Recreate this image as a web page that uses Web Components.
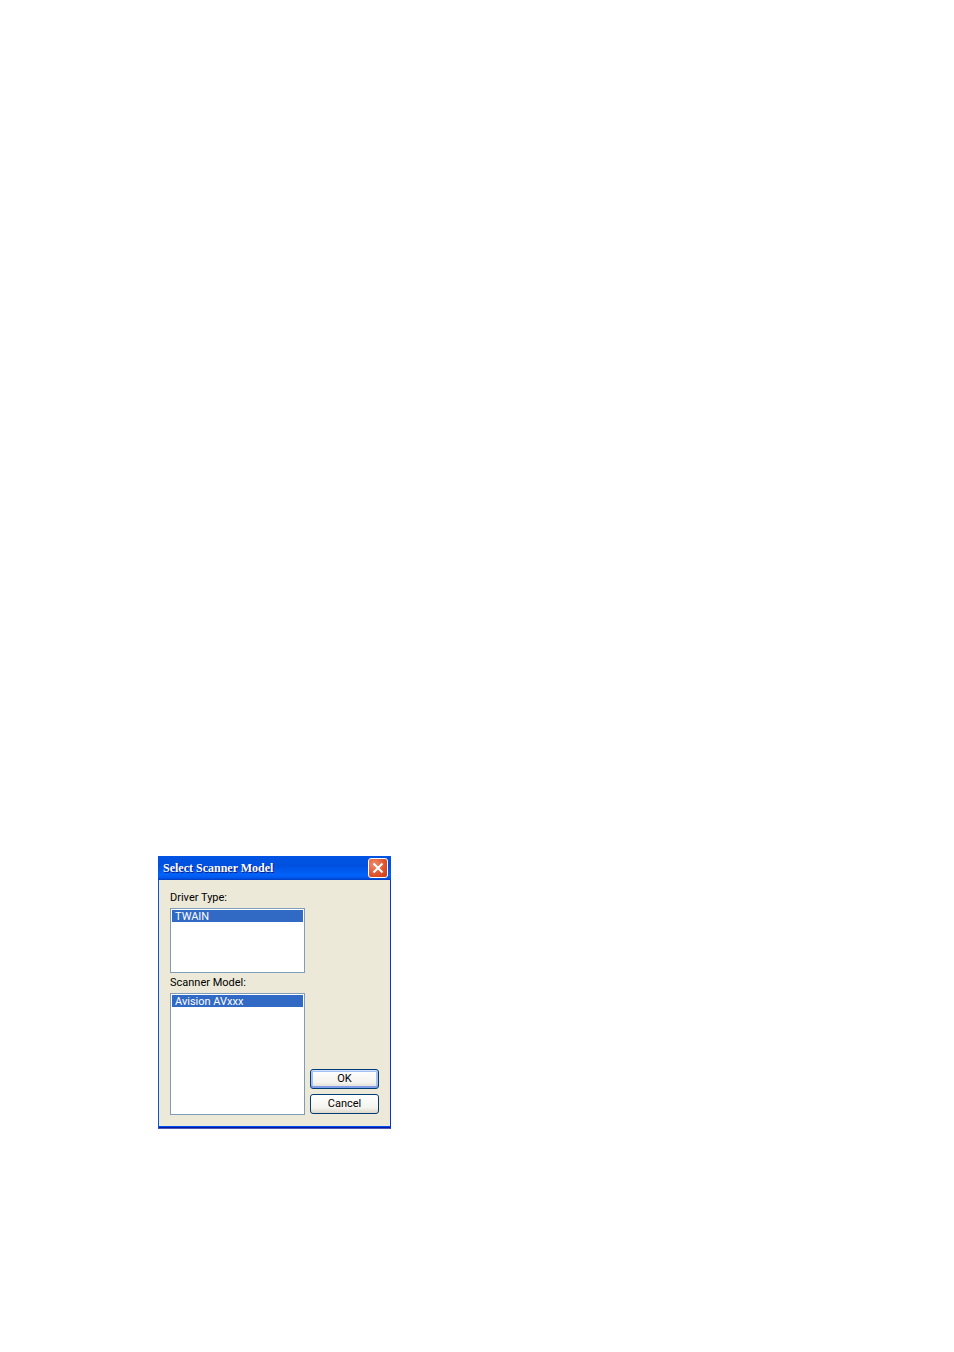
<!DOCTYPE html>
<html lang="en">
<head>
<meta charset="utf-8">
<title>Select Scanner Model</title>
<style>
  body {
    margin: 0;
    background: #fff;
    font-family: Roboto, "Liberation Sans", Arial, sans-serif;
    font-size: 11px;
    line-height: 14px;
    color: #000;
  }
</style>
</head>
<body>
<scanner-page>
  <xp-dialog caption="Select Scanner Model">
    <xp-listbox label="Driver Type:" rows="5" items="TWAIN"></xp-listbox>
    <xp-listbox label="Scanner Model:" rows="9" items="Avision AVxxx"></xp-listbox>
    <xp-button slot="actions" default>OK</xp-button>
    <xp-button slot="actions">Cancel</xp-button>
  </xp-dialog>
</scanner-page>

<script>
function createTemplate(html) {
  const template = document.createElement('template');
  template.innerHTML = html;
  return template;
}

const pageTemplate = createTemplate(`
<style>
  :host {
    display: flex;
    align-items: flex-start;
    box-sizing: border-box;
    min-height: 100vh;
    padding: 856px 16px 16px 158px;
  }
</style>
<slot></slot>
`);

class ScannerPage extends HTMLElement {
  constructor() {
    super();
    this.attachShadow({ mode: 'open' }).appendChild(pageTemplate.content.cloneNode(true));
  }
}

const dialogTemplate = createTemplate(`
<style>
  :host {
    display: block;
  }

  section {
    background: #ece9d8;
    border: solid #0831d9;
    border-width: 0 1px 1px;
    border-left-color: #0855dd;
    border-bottom-color: #4e58b8;
    box-shadow: inset 0 -1px #001ea0, inset 0 -2px #0048f1;
    padding-bottom: 2px;
  }

  header {
    display: flex;
    align-items: center;
    justify-content: space-between;
    height: 24px;
    padding: 0 3px 0 5px;
    margin: 0 -1px;
    background: linear-gradient(#0054e3, #0050e0 40%, #0062fa 80%, #0058ee 90%, #003cc0);
  }

  h1 {
    margin: 0;
    font: bold 12px/16px "Liberation Serif", "Times New Roman", serif;
    color: #fff;
    text-shadow: 1px 1px #0a1883;
  }

  .close {
    display: flex;
    align-items: center;
    justify-content: center;
    width: 20px;
    height: 20px;
    padding: 0;
    border: 1px solid #fff;
    border-radius: 3px;
    background: radial-gradient(circle at 30% 30%, #ee8c6c, #e0512c 60%, #c83c14);
  }

  .body {
    display: flex;
    gap: 5px;
    padding: 11px;
  }

  .fields {
    display: flex;
    flex-direction: column;
    gap: 3px;
    width: 135px;
  }

  .actions {
    display: flex;
    flex-direction: column;
    justify-content: flex-end;
    gap: 5px;
    width: 69px;
    padding-bottom: 1px;
  }
</style>

<section role="dialog" aria-labelledby="caption">
  <header>
    <h1 id="caption"></h1>
    <button class="close" type="button" aria-label="Close">
      <svg width="12" height="12" viewBox="0 0 12 12">
        <path d="M1.5 1.5L10.5 10.5M10.5 1.5L1.5 10.5" fill="none" stroke="#fff" stroke-width="2"/>
      </svg>
    </button>
  </header>
  <div class="body">
    <div class="fields"><slot></slot></div>
    <div class="actions"><slot name="actions"></slot></div>
  </div>
</section>
`);

class XpDialog extends HTMLElement {
  constructor() {
    super();
    this._shadowRoot = this.attachShadow({ mode: 'open' });
    this._shadowRoot.appendChild(dialogTemplate.content.cloneNode(true));
    this.$caption = this._shadowRoot.querySelector('h1');
    this._shadowRoot.querySelector('.close').addEventListener('click', () => this.remove());
  }

  connectedCallback() {
    this.$caption.textContent = this.getAttribute('caption');
  }
}

const listboxTemplate = createTemplate(`
<style>
  :host {
    display: flex;
    flex-direction: column;
    gap: 3px;
  }

  select {
    appearance: none;
    box-sizing: content-box;
    width: auto;
    margin: 0;
    padding: 1px;
    border: 1px solid #7f9db9;
    border-radius: 0;
    outline: none;
    background: #fff;
    font: inherit;
    overflow: hidden;
  }

  option {
    min-height: 0;
    height: 12px;
    padding: 0 3px;
    line-height: 12px;
  }

  option:checked {
    background: #316ac5 linear-gradient(#316ac5, #316ac5);
    color: #fff;
    -webkit-text-fill-color: #fff;
  }
</style>

<label for="list"></label>
<select id="list"></select>
`);

class XpListbox extends HTMLElement {
  constructor() {
    super();
    this._shadowRoot = this.attachShadow({ mode: 'open' });
    this._shadowRoot.appendChild(listboxTemplate.content.cloneNode(true));
    this.$label = this._shadowRoot.querySelector('label');
    this.$select = this._shadowRoot.querySelector('select');
  }

  connectedCallback() {
    const rows = Number(this.getAttribute('rows'));
    this.$label.textContent = this.getAttribute('label');
    this.$select.size = rows;
    // rows are 12px, plus a little slack under the last one
    this.$select.style.height = `${rows * 12 + (rows > 5 ? 10 : 1)}px`;
    this.$select.innerHTML = '';
    this.getAttribute('items').split(',').forEach((item, index) => {
      this.$select.add(new Option(item, item, index === 0, index === 0));
    });
  }
}

const buttonTemplate = createTemplate(`
<style>
  :host {
    display: block;
  }

  button {
    display: block;
    width: 100%;
    height: 20px;
    padding: 0;
    border: 1px solid #003c74;
    border-radius: 3px;
    background: linear-gradient(#fff, #f4f3ee 70%, #dcd8cc);
    color: inherit;
    font: inherit;
  }

  :host([default]) button {
    box-shadow: inset 0 -2px #7f9de8, inset 0 1px #cee0fc, inset 0 0 0 2px #a5c0f2;
  }
</style>
<button type="button"><slot></slot></button>
`);

class XpButton extends HTMLElement {
  constructor() {
    super();
    this.attachShadow({ mode: 'open' }).appendChild(buttonTemplate.content.cloneNode(true));
  }
}

window.customElements.define('scanner-page', ScannerPage);
window.customElements.define('xp-dialog', XpDialog);
window.customElements.define('xp-listbox', XpListbox);
window.customElements.define('xp-button', XpButton);
</script>
</body>
</html>
